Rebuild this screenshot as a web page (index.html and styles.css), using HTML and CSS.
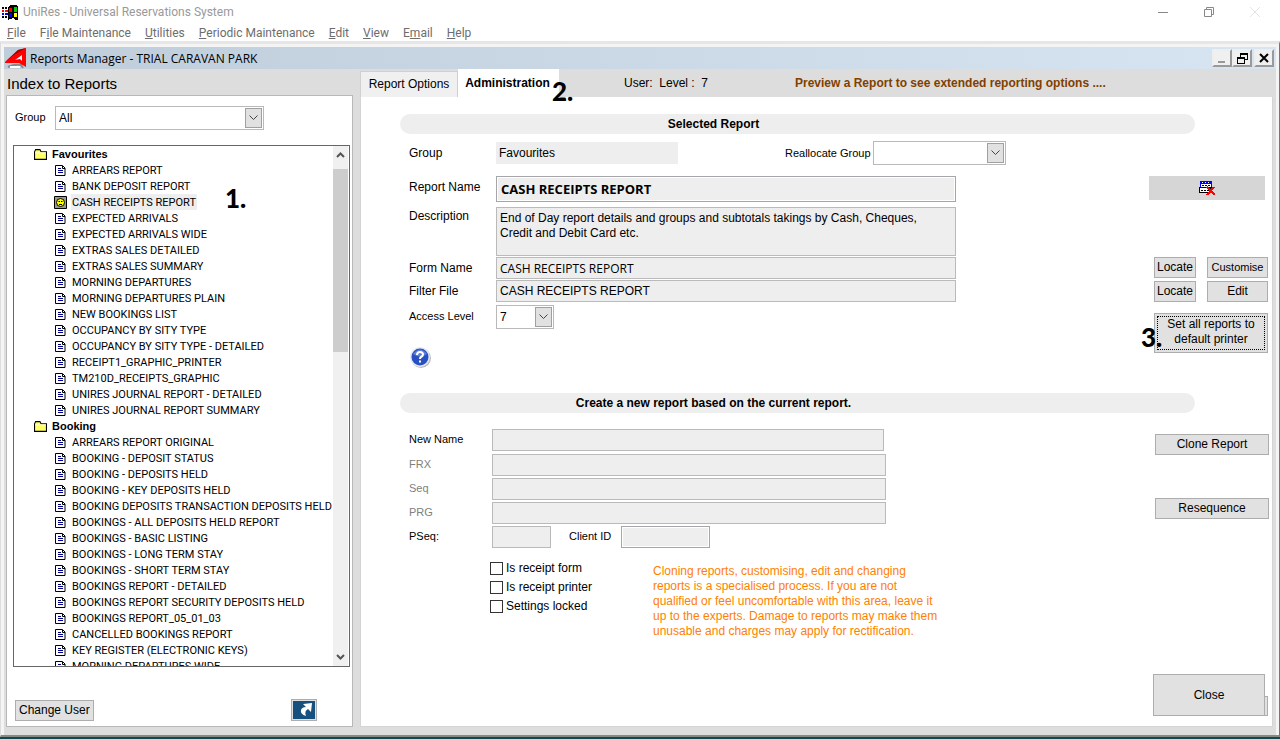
FILE: index.html
```html
<!DOCTYPE html>
<html lang="en">
<head>
  <meta charset="UTF-8">
  <title>UniRes - Universal Reservations System</title>
  <link rel="stylesheet" href="styles.css">
</head>
<body>
  <!-- icons used more than once -->
  <svg class="defs" width="0" height="0">
    <symbol id="doc" viewBox="0 0 11 11">
      <path d="M.5 .5H7.500L10 3V10.500H.5Z" fill="#fff" stroke="#000"/>
      <path d="M7.500 1V3.500H10" fill="none" stroke="#000"/>
      <path d="M3 3.500H6M3 5.500H8M3 7.500H8" stroke="#000080"/>
    </symbol>
    <symbol id="folder" viewBox="0 0 12 10">
      <path d="M.5 9.500V2.500L1.500 .5H5.500L6.500 2.500H11.500V9.500Z" fill="#ff6" stroke="#000"/>
      <path d="M1 3.500H11" stroke="#ffc"/>
    </symbol>
    <symbol id="chevron" viewBox="0 0 9 6">
      <path d="M.5 .5L4.500 4.500L8.500 .5" fill="none" stroke="#444"/>
    </symbol>
  </svg>

  <header class="titlebar">
    <svg class="app-icon" width="17" height="15" viewBox="0 0 17 15" shape-rendering="crispEdges">
      <path d="M6 2L9 0H14L16 2V15H14L11 13L6 15Z" fill="#000"/>
      <path d="M7 3H10V7H7Z" fill="#f00"/>
      <path d="M12 2H15V7H12Z" fill="#0c0"/>
      <path d="M7 8H10V12H7Z" fill="#00f"/>
      <path d="M12 8H15V12H12Z" fill="#ff0"/>
      <path d="M0 3H2M3 3H5M0 12H2M3 12H5" stroke="#000" stroke-width="2"/>
      <path d="M0 6H2M3 6H6" stroke="#f00" stroke-width="2"/>
      <path d="M0 9H2M3 9H6" stroke="#00f" stroke-width="2"/>
    </svg>
    <span class="app-title">UniRes - Universal Reservations System</span>
    <div class="app-buttons">
      <button type="button" aria-label="Minimise"><svg width="10" height="10"><path d="M0 5.500H10" stroke="#888"/></svg></button>
      <button type="button" aria-label="Restore"><svg width="10" height="10"><path d="M.5 2.500H7.500V9.500H.5ZM2.500 2V.5H9.500V7.500H8" fill="none" stroke="#888"/></svg></button>
      <button type="button" aria-label="Close"><svg width="10" height="10"><path d="M0 0L10 10M10 0L0 10" stroke="#e4e4e4"/></svg></button>
    </div>
  </header>

  <nav class="menubar">
    <a href="#"><u>F</u>ile</a>
    <a href="#">F<u>i</u>le Maintenance</a>
    <a href="#"><u>U</u>tilities</a>
    <a href="#"><u>P</u>eriodic Maintenance</a>
    <a href="#"><u>E</u>dit</a>
    <a href="#"><u>V</u>iew</a>
    <a href="#">E<u>m</u>ail</a>
    <a href="#"><u>H</u>elp</a>
  </nav>

  <div class="window">
    <div class="window-title">
      <svg width="23" height="22" viewBox="0 0 23 22">
        <path d="M4 20Q10 17 17 18L19 21" fill="none" stroke="#888" stroke-width="2"/>
        <path d="M6 20H16" stroke="#fff" stroke-width="2"/>
        <path d="M1 15L14 3L22 1V20L15 16H1Z" fill="#f00"/>
        <path d="M1 15L14 3L22 1L10 8Z" fill="#a00"/>
        <path d="M11 13L18 8V14L16 12Z" fill="#e8f0f8"/>
      </svg>
      <span>Reports Manager - TRIAL CARAVAN PARK</span>
      <div class="window-buttons">
        <button type="button" aria-label="Minimise"><svg width="12" height="12"><path d="M2 10H9" stroke="#999" stroke-width="2"/></svg></button>
        <button type="button" aria-label="Restore"><svg width="12" height="12" shape-rendering="crispEdges"><path d="M1 5H8V11H1ZM4 5V1H11V7H8M1 6H8M4 2H11" fill="none" stroke="#000"/></svg></button>
        <button type="button" aria-label="Close"><svg width="12" height="12"><path d="M2 2L10 10M10 2L2 10" stroke="#000" stroke-width="2"/></svg></button>
      </div>
    </div>

    <main class="content">
      <!-- report index -->
      <section class="index">
        <h1>Index to Reports</h1>
        <div class="index-panel">
          <div class="group-row">
            <label for="group">Group</label>
            <span class="select"><select id="group"><option>All</option></select><svg width="9" height="6"><use href="#chevron"/></svg></span>
          </div>

          <div class="tree">
            <ul class="tree-list">
              <li class="folder"><svg><use href="#folder"/></svg><span>Favourites</span></li>
              <li><svg><use href="#doc"/></svg><span>ARREARS REPORT</span></li>
              <li><svg><use href="#doc"/></svg><span>BANK DEPOSIT REPORT</span></li>
              <li class="selected">
                <svg viewBox="0 0 13 13"><path d="M.5 .5H12.500V12.500H.5Z" fill="#999" stroke="#000"/><circle cx="6.500" cy="6.500" r="4" fill="#ff0" stroke="#000"/><path d="M4.500 5.500H6M7 5.500H8.500M5 8.500H8" stroke="#000"/></svg>
                <span>CASH RECEIPTS REPORT</span>
              </li>
              <li><svg><use href="#doc"/></svg><span>EXPECTED ARRIVALS</span></li>
              <li><svg><use href="#doc"/></svg><span>EXPECTED ARRIVALS WIDE</span></li>
              <li><svg><use href="#doc"/></svg><span>EXTRAS SALES DETAILED</span></li>
              <li><svg><use href="#doc"/></svg><span>EXTRAS SALES SUMMARY</span></li>
              <li><svg><use href="#doc"/></svg><span>MORNING DEPARTURES</span></li>
              <li><svg><use href="#doc"/></svg><span>MORNING DEPARTURES PLAIN</span></li>
              <li><svg><use href="#doc"/></svg><span>NEW BOOKINGS LIST</span></li>
              <li><svg><use href="#doc"/></svg><span>OCCUPANCY BY SITY TYPE</span></li>
              <li><svg><use href="#doc"/></svg><span>OCCUPANCY BY SITY TYPE - DETAILED</span></li>
              <li><svg><use href="#doc"/></svg><span>RECEIPT1_GRAPHIC_PRINTER</span></li>
              <li><svg><use href="#doc"/></svg><span>TM210D_RECEIPTS_GRAPHIC</span></li>
              <li><svg><use href="#doc"/></svg><span>UNIRES JOURNAL REPORT - DETAILED</span></li>
              <li><svg><use href="#doc"/></svg><span>UNIRES JOURNAL REPORT SUMMARY</span></li>
              <li class="folder"><svg><use href="#folder"/></svg><span>Booking</span></li>
              <li><svg><use href="#doc"/></svg><span>ARREARS REPORT ORIGINAL</span></li>
              <li><svg><use href="#doc"/></svg><span>BOOKING - DEPOSIT STATUS</span></li>
              <li><svg><use href="#doc"/></svg><span>BOOKING - DEPOSITS HELD</span></li>
              <li><svg><use href="#doc"/></svg><span>BOOKING - KEY DEPOSITS HELD</span></li>
              <li><svg><use href="#doc"/></svg><span>BOOKING DEPOSITS TRANSACTION DEPOSITS HELD</span></li>
              <li><svg><use href="#doc"/></svg><span>BOOKINGS - ALL DEPOSITS HELD REPORT</span></li>
              <li><svg><use href="#doc"/></svg><span>BOOKINGS - BASIC LISTING</span></li>
              <li><svg><use href="#doc"/></svg><span>BOOKINGS - LONG TERM STAY</span></li>
              <li><svg><use href="#doc"/></svg><span>BOOKINGS - SHORT TERM STAY</span></li>
              <li><svg><use href="#doc"/></svg><span>BOOKINGS REPORT - DETAILED</span></li>
              <li><svg><use href="#doc"/></svg><span>BOOKINGS REPORT SECURITY DEPOSITS HELD</span></li>
              <li><svg><use href="#doc"/></svg><span>BOOKINGS REPORT_05_01_03</span></li>
              <li><svg><use href="#doc"/></svg><span>CANCELLED BOOKINGS REPORT</span></li>
              <li><svg><use href="#doc"/></svg><span>KEY REGISTER (ELECTRONIC KEYS)</span></li>
              <li><svg><use href="#doc"/></svg><span>MORNING DEPARTURES WIDE</span></li>
            </ul>
            <div class="scrollbar">
              <svg width="9" height="23" viewBox="0 0 9 23"><path d="M1 11L4.500 7.500L8 11" fill="none" stroke="#555" stroke-width="2"/></svg>
              <div class="thumb"></div>
              <svg width="9" height="17" viewBox="0 0 9 17"><path d="M1 6L4.500 9.500L8 6" fill="none" stroke="#555" stroke-width="2"/></svg>
            </div>
            <span class="step step-1">1.</span>
          </div>

          <div class="index-footer">
            <button type="button" class="btn">Change User</button>
            <button type="button" class="btn shortcut" aria-label="Shortcut">
              <svg width="22" height="18" viewBox="0 0 22 18"><path d="M0 0H22V18H0Z" fill="#16507f"/><path d="M10 3L19 2L18 11L15 8Q11 10 13 15Q7 13 8 9Q9 6 13 6Z" fill="#fff"/></svg>
            </button>
          </div>
        </div>
      </section>

      <!-- report details -->
      <section class="details">
        <div class="tabs">
          <button type="button" class="tab">Report Options</button>
          <button type="button" class="tab active">Administration</button>
          <span class="user-level">User:&nbsp; Level :&nbsp; 7</span>
          <span class="preview-note">Preview a Report to see extended reporting options ....</span>
          <span class="step step-2">2.</span>
        </div>

        <form class="admin">
          <h2>Selected Report</h2>
          <div class="top-row">
            <label for="report-group">Group</label>
            <input type="text" id="report-group" class="flat" value="Favourites" readonly>
            <label for="reallocate" class="small">Reallocate Group</label>
            <span class="select"><select id="reallocate"><option></option></select><svg width="9" height="6"><use href="#chevron"/></svg></span>
          </div>

          <div class="columns">
            <div class="fields">
              <div class="field name"><label for="name">Report Name</label><input type="text" id="name" class="framed" value="CASH RECEIPTS REPORT"></div>
              <div class="field description"><label for="description">Description</label><textarea id="description">End of Day report details and groups and subtotals takings by Cash, Cheques, Credit and Debit Card etc.</textarea></div>
              <div class="field"><label for="form-name">Form Name</label><input type="text" id="form-name" value="CASH RECEIPTS REPORT"></div>
              <div class="field"><label for="filter">Filter File</label><input type="text" id="filter" value="CASH RECEIPTS REPORT"></div>
              <div class="field access"><label for="access" class="small">Access Level</label><span class="select"><select id="access"><option>7</option></select><svg width="9" height="6"><use href="#chevron"/></svg></span></div>
              <button type="button" class="help" aria-label="Help">
                <svg width="24" height="22" viewBox="0 0 24 22">
                  <circle cx="12" cy="11" r="10" fill="#bbb"/>
                  <circle cx="11" cy="10" r="10" fill="#e4e9f5"/>
                  <circle cx="11" cy="10" r="8.500" fill="#2850c0"/>
                  <path d="M4 7Q11 -2 18 7Q11 12 4 7Z" fill="#5c80dc"/>
                  <path d="M8 8Q8 5 11 5Q14 5 14 7.500Q14 9 12 10Q11 10.500 11 12M11 13.500V15.500" fill="none" stroke="#fff" stroke-width="2"/>
                </svg>
              </button>
            </div>

            <div class="actions">
              <button type="button" class="delete" aria-label="Delete report">
                <svg width="17" height="15" viewBox="0 0 17 15" shape-rendering="crispEdges">
                  <path d="M1 0H13V7H12V12H0V6H1Z" fill="#000"/>
                  <path d="M2 3H12V6H2ZM1 7H11V11H1Z" fill="#fff"/>
                  <path d="M1 0H13V3H1ZM1 3H2V6H1ZM12 3H13V6H12Z" fill="#00f"/>
                  <path d="M3 1.500H12" stroke="#fff" stroke-dasharray="1 2"/>
                  <path d="M3 4.500H11M2 9.500H10" stroke="#000" stroke-dasharray="2 1"/>
                  <path d="M8 6L16 14M15 6L8 14" stroke="#f00" stroke-width="2"/>
                </svg>
              </button>
              <div class="action-pair">
                <button type="button" class="btn">Locate</button>
                <button type="button" class="btn small">Customise</button>
                <button type="button" class="btn">Locate</button>
                <button type="button" class="btn">Edit</button>
              </div>
              <button type="button" class="btn printer"><span>Set all reports to default printer</span></button>
              <span class="step step-3">3.</span>
            </div>
          </div>

          <h2>Create a new report based on the current report.</h2>
          <div class="columns clone">
            <div class="fields">
              <div class="field new-name"><label for="new-name">New Name</label><input type="text" id="new-name"></div>
              <div class="field muted"><label for="frx">FRX</label><input type="text" id="frx"></div>
              <div class="field muted"><label for="seq">Seq</label><input type="text" id="seq"></div>
              <div class="field muted"><label for="prg">PRG</label><input type="text" id="prg"></div>
              <div class="field ids">
                <label for="pseq">PSeq:</label><input type="text" id="pseq">
                <label for="client" class="client-label">Client ID</label><input type="text" id="client" class="framed">
              </div>
              <div class="options">
                <div class="checks">
                  <label><input type="checkbox"> Is receipt form</label>
                  <label><input type="checkbox"> Is receipt printer</label>
                  <label><input type="checkbox"> Settings locked</label>
                </div>
                <p class="warning">
                  Cloning reports, customising, edit and changing<br>
                  reports is a specialised process. If you are not<br>
                  qualified or feel uncomfortable with this area, leave it<br>
                  up to the experts. Damage to reports may make them<br>
                  unusable and charges may apply for rectification.
                </p>
              </div>
            </div>

            <div class="actions">
              <button type="button" class="btn wide">Clone Report</button>
              <button type="button" class="btn wide">Resequence</button>
              <div class="close-wrap">
                <button type="button" class="btn close">Close</button>
                <span class="close-edge"></span>
              </div>
            </div>
          </div>
        </form>
      </section>
    </main>
  </div>
</body>
</html>
```
FILE: styles.css
```css
* {
  box-sizing: border-box;
}

body {
  margin: 0;
  height: 100vh;
  display: flex;
  flex-direction: column;
  overflow: hidden;
  background-color: #0d4a4c;
  color: #000;
  font-family: "Liberation Sans", Arial, sans-serif;
  font-size: 12px;
  line-height: 15px;
}

button, input, select, textarea {
  font: inherit;
  color: inherit;
  margin: 0;
  border-radius: 0;
}

.defs {
  position: absolute;
}

/* ===== application frame ===== */
.titlebar {
  display: flex;
  align-items: center;
  height: 24px;
  padding-left: 2px;
  background-color: #fff;
}

.app-title {
  margin-left: 4px;
  color: #999;
  font-family: Roboto, "Open Sans", sans-serif;
  font-size: 12px;
}

.app-buttons {
  display: flex;
  gap: 6px;
  margin-left: auto;
  padding-right: 5px;
}

.app-buttons button {
  display: flex;
  align-items: center;
  justify-content: center;
  width: 40px;
  height: 20px;
  padding: 0;
  border: none;
  background: none;
}

.menubar {
  display: flex;
  gap: 14px;
  height: 17px;
  padding-left: 7px;
  background-color: #fff;
  font-family: Roboto, "Open Sans", sans-serif;
  font-size: 12px;
  line-height: 18px;
}

.menubar a {
  color: #6d6d6d;
  text-decoration: none;
}

/* ===== reports window ===== */
.window {
  flex: 1;
  display: flex;
  flex-direction: column;
  min-height: 0;
  margin-bottom: 2px;
  padding: 3px 3px 0 3px;
  border-style: solid;
  border-width: 3px 1px 2px 1px;
  border-color: #e6e6e6 #777 #888 #ddd;
  background-color: #f4f4f4;
}

.window-title {
  display: flex;
  align-items: center;
  height: 22px;
  background: linear-gradient(to right, #bfcddb, #d7e4f2);
  font-family: "Open Sans", "Noto Sans", sans-serif;
  font-size: 12px;
}

.window-title > span {
  margin-left: 3px;
}

.window-buttons {
  display: flex;
  margin-left: auto;
  padding-right: 2px;
}

.window-buttons button {
  display: flex;
  align-items: center;
  justify-content: center;
  width: 20px;
  height: 18px;
  padding: 0;
  border: 2px outset #eee;
  background-color: #f0f0f0;
}

.window-buttons button:last-child {
  margin-left: 2px;
}

.content {
  flex: 1;
  display: flex;
  gap: 7px;
  min-height: 0;
  padding: 0 3px 8px 2px;
  background-color: #ddd;
}

/* ===== left side ===== */
.index {
  display: flex;
  flex-direction: column;
  width: 347px;
}

h1 {
  height: 26px;
  margin: 0;
  padding-left: 1px;
  font-size: 15px;
  font-weight: normal;
  line-height: 30px;
}

.index-panel {
  flex: 1;
  display: flex;
  flex-direction: column;
  min-height: 0;
  padding: 10px 2px 5px 6px;
  border: 1px solid #b8b8b8;
  background-color: #fff;
}

.group-row {
  display: flex;
  gap: 9px;
  padding-left: 2px;
}

.group-row label {
  width: 31px;
  font-size: 11px;
  line-height: 23px;
}

.group-row .select {
  width: 209px;
}

/* drop-down with its own arrow box */
.select {
  position: relative;
  display: block;
  height: 24px;
}

.select select {
  width: 100%;
  height: 100%;
  padding: 0 20px 0 3px;
  border: 1px solid #b9b9b9;
  background-color: #fff;
  appearance: none;
}

.select svg {
  position: absolute;
  top: 2px;
  right: 2px;
  width: 17px;
  height: 20px;
  padding: 6px 3px;
  border: 1px solid #a0a0a0;
  background-color: #e1e1e1;
  pointer-events: none;
}

.tree {
  position: relative;
  flex: 1;
  display: flex;
  min-height: 0;
  margin-top: 15px;
  border: 1px solid #666;
}

.tree-list {
  flex: 1;
  min-width: 0;
  margin: 0;
  padding: 0;
  overflow: hidden;
  list-style: none;
  font-family: Roboto, "Liberation Sans", sans-serif;
  font-size: 11px;
  line-height: 18px;
}

.tree-list li {
  display: flex;
  align-items: center;
  gap: 4px;
  height: 16px;
  padding-left: 40px;
  white-space: nowrap;
}

.tree-list svg {
  flex: none;
  width: 13px;
  height: 11px;
  padding: 0 1px;
}

.tree-list span {
  height: 16px;
  padding: 0 1px;
}

.tree-list .folder {
  padding-left: 20px;
  font-family: "Liberation Sans", Arial, sans-serif;
  font-weight: bold;
  line-height: 16px;
}

.tree-list .folder svg {
  padding: 0;
}

.tree-list .selected svg {
  height: 13px;
  padding: 0;
}

.selected span {
  background-color: #eee;
}

.scrollbar {
  display: flex;
  flex-direction: column;
  align-items: center;
  width: 15px;
  margin-right: 1px;
  background-color: #f0f0f0;
}

.thumb {
  width: 100%;
  height: 183px;
  margin-bottom: auto;
  background-color: #cdcdcd;
}

.index-footer {
  display: flex;
  align-items: flex-end;
  justify-content: space-between;
  height: 54px;
  padding: 0 33px 0 2px;
}

/* numbered steps lying over the page */
.step {
  position: absolute;
  font-family: Lato, "Open Sans", sans-serif;
  font-size: 26px;
  font-weight: 900;
  line-height: 26px;
}

.step-1 {
  top: 39px;
  left: 211px;
}

.step-2 {
  top: 9px;
  left: 192px;
}

.step-3 {
  top: 148px;
  left: -8px;
}

.btn {
  height: 21px;
  padding: 0 2px;
  border: 1px solid #adadad;
  background-color: #e1e1e1;
}

.index-footer .btn {
  padding: 0 3px;
}

.index-footer .shortcut {
  display: flex;
  height: 22px;
  padding: 1px;
}

/* ===== right side ===== */
.details {
  flex: 1;
  display: flex;
  flex-direction: column;
}

.tabs {
  position: relative;
  display: flex;
  height: 28px;
}

.tab {
  align-self: flex-end;
  height: 26px;
  width: 98px;
  padding: 0;
  border: 1px solid #d0d0d0;
  border-bottom: none;
  background-color: #f0f0f0;
}

.tab.active {
  width: 101px;
  height: 28px;
  padding: 0 2px 0 0;
  border: none;
  background-color: #fff;
  font-weight: bold;
}

.user-level {
  width: 171px;
  margin-left: 65px;
  line-height: 28px;
}

.preview-note {
  color: #804000;
  font-weight: bold;
  line-height: 28px;
}

.admin {
  flex: 1;
  display: flex;
  flex-direction: column;
  padding: 17px 4px 10px 39px;
  border: 1px solid #d4d4d4;
  border-top: none;
  background-color: #fff;
}

h2 {
  height: 20px;
  margin: 0 73px 0 0;
  padding-right: 168px;
  border-radius: 10px;
  background-color: #eee;
  font-size: 12px;
  line-height: 20px;
  text-align: center;
}

.small {
  font-size: 11px;
}

input[type="text"], textarea {
  height: 22px;
  padding: 0 3px;
  border: 1px solid #bababa;
  background-color: #eee;
}

textarea {
  resize: none;
  overflow: hidden;
}

input.flat {
  border: none;
}

input.framed {
  border-color: #a5a5aa;
  box-shadow: inset 0 0 0 1px #fff;
}

.top-row {
  display: flex;
  align-items: center;
  margin-top: 7px;
  padding-left: 9px;
}

.top-row label {
  width: 87px;
}

.top-row input {
  width: 182px;
  margin-right: 107px;
}

.top-row .small {
  width: 88px;
}

.top-row .select {
  width: 133px;
}

.columns {
  display: flex;
  justify-content: space-between;
  height: 228px;
  padding: 11px 0 0 9px;
}

.fields {
  flex: 1;
  display: flex;
  flex-direction: column;
  align-items: flex-start;
}

.field {
  display: flex;
  width: 100%;
  margin-bottom: 1px;
}

.field label {
  width: 87px;
  line-height: 22px;
}

.field input, .field textarea {
  flex: 1;
}

.actions {
  position: relative;
  width: 119px;
  margin-left: 193px;
}

.name input {
  height: 26px;
  padding: 0 4px;
  font-family: "Open Sans", "Noto Sans", sans-serif;
  font-size: 13px;
  font-weight: bold;
}

.name {
  margin-bottom: 5px;
}

.description textarea {
  height: 49px;
  padding-top: 3px;
}

.description label {
  line-height: 18px;
}

#form-name {
  font-family: "Open Sans", "Noto Sans", sans-serif;
}

.access {
  margin-top: 2px;
}

.access .select {
  width: 58px;
}

.help {
  margin-top: 17px;
  padding: 0;
  border: none;
  background: none;
}

.delete {
  display: flex;
  align-items: center;
  justify-content: center;
  width: 116px;
  height: 24px;
  border: none;
  background-color: #d6d6d6;
}

.action-pair {
  display: grid;
  grid-template-columns: 42px 61px;
  gap: 3px 11px;
  margin: 57px 0 11px 5px;
}

.action-pair .btn {
  padding: 0;
}

.printer {
  width: 114px;
  height: 40px;
  margin-left: 5px;
}

.printer span {
  display: block;
  height: 34px;
  border: 1px dotted #000;
}

/* clone part */
.clone {
  flex: 1;
  padding-top: 16px;
}

.clone .field {
  margin-bottom: 2px;
  padding-right: 70px;
}

.clone .field label {
  width: 83px;
  font-size: 11px;
  line-height: 20px;
}

.clone .new-name {
  margin-bottom: 3px;
  padding-right: 72px;
}

.muted label {
  color: #808080;
}

.clone .ids input {
  flex: none;
  width: 59px;
}

.clone .ids .client-label {
  width: 52px;
  margin-left: 18px;
}

.clone .ids .framed {
  width: 89px;
}

.options {
  display: flex;
  margin: 9px 0 0 81px;
}

.checks {
  width: 163px;
}

.checks label {
  display: flex;
  align-items: center;
  gap: 3px;
  height: 19px;
}

.checks input {
  width: 13px;
  height: 13px;
  margin: 0;
  border: 1px solid #333;
  background-color: #fff;
  appearance: none;
}

.checks input:checked {
  background-color: #333;
}

.warning {
  margin: 5px 0 0 0;
  color: #ff8000;
  white-space: nowrap;
}

.clone .actions {
  display: flex;
  flex-direction: column;
  padding-top: 5px;
}

.wide {
  width: 114px;
  margin: 0 0 43px 6px;
}

.close-wrap {
  display: flex;
  align-items: flex-end;
  margin: auto 0 0 4px;
}

.close {
  width: 112px;
  height: 42px;
}

.close-edge {
  width: 3px;
  height: 20px;
  border: 1px solid #adadad;
  border-left: none;
  background-color: #e1e1e1;
}
```
